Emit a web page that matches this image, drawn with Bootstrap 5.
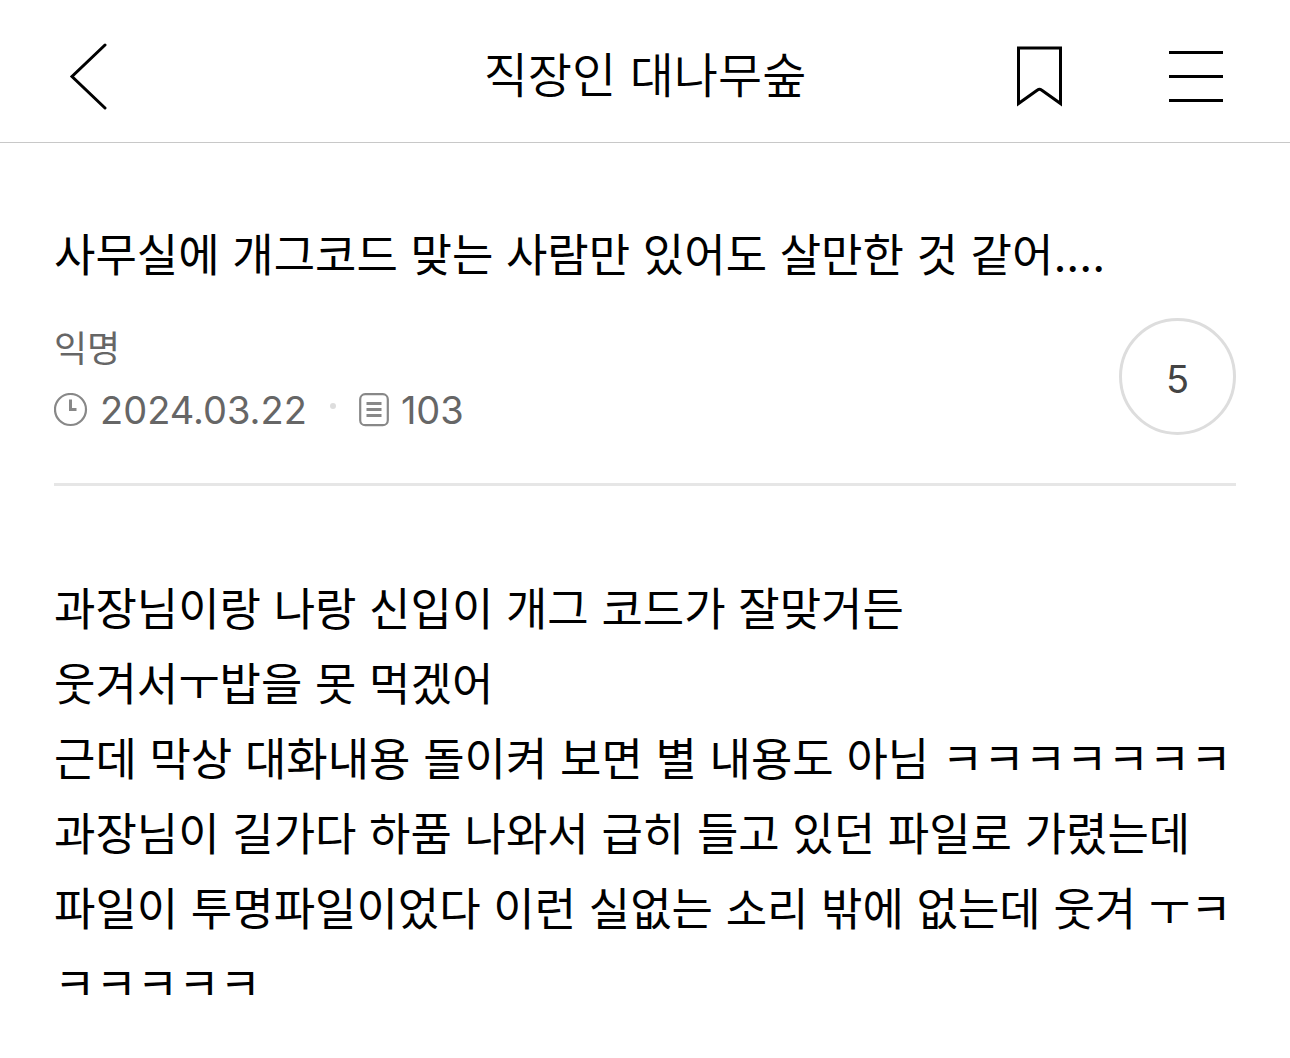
<!DOCTYPE html>
<html lang="ko">
<head>
<meta charset="utf-8">
<meta name="viewport" content="width=device-width, initial-scale=1">
<title>직장인 대나무숲</title>
<link href="https://cdn.jsdelivr.net/npm/bootstrap@5.3.0/dist/css/bootstrap.min.css" rel="stylesheet">
<style>
  body { font-family: Inter, "Noto Sans CJK KR", sans-serif; color: #000; background: #fff; }
  .app-bar { height: 143px; padding: 10px 67px 0; border-bottom: 1px solid #c8c8c8; }
  .bar-side { flex: 1 1 0; }
  .bar-title { font-size: 48px; line-height: 72px; font-weight: 350; }
  .icon-btn { color: #000; line-height: 0; }
  .bar-actions { gap: 106px; }
  .post { padding: 75px 54px 40px; }
  .post-title { font-size: 45px; line-height: 75px; font-weight: 400; margin-bottom: 25px; }
  .post-info { padding-bottom: 43px; border-bottom: 3px solid #e6e6e6; }
  .post-author { font-size: 36px; line-height: 62px; color: #666; }
  .post-meta { font-size: 38px; line-height: 60px; color: #666; }
  .meta-icon { color: #888; margin-right: 12px; }
  .meta-dot { width: 6px; height: 6px; margin: 0 23px 8px; background: #ddd; }
  .count-btn { width: 117px; height: 117px; border: 3px solid #ddd; font-size: 38px; color: #444; padding: 6px 0 0; }
  .post-body { padding-top: 86px; font-size: 45px; line-height: 75px; }
</style>
<script src="https://cdn.jsdelivr.net/npm/bootstrap@5.3.0/dist/js/bootstrap.bundle.min.js"></script>
</head>
<body>
<header class="app-bar d-flex align-items-center">
  <div class="bar-side d-flex">
    <button type="button" class="icon-btn btn p-0 border-0" aria-label="뒤로">
      <svg width="41" height="68" viewBox="-3 0 41 68" fill="none" stroke="currentColor" stroke-width="3" stroke-linecap="round"><path d="M35 3L2 34.500L35 66"/></svg>
    </button>
  </div>
  <h1 class="bar-title mb-0">직장인 대나무숲</h1>
  <div class="bar-side bar-actions d-flex justify-content-end align-items-center">
    <button type="button" class="icon-btn btn p-0 border-0" aria-label="북마크">
      <svg width="46" height="62" viewBox="0 0 46 62" fill="none" stroke="currentColor" stroke-width="3"><path d="M1.500 3H43.500V58.500L24.500 45Q22.500 43.500 20.500 45L1.500 58.500Z"/></svg>
    </button>
    <button type="button" class="icon-btn btn p-0 border-0" aria-label="메뉴">
      <svg width="54" height="54" viewBox="0 0 54 54" fill="none" stroke="currentColor" stroke-width="3"><path d="M0 3.500H54M0 27.500H54M0 51.500H54"/></svg>
    </button>
  </div>
</header>
<main class="post">
  <h2 class="post-title">사무실에 개그코드 맞는 사람만 있어도 살만한 것 같어....</h2>
  <div class="post-info d-flex justify-content-between align-items-start">
    <div>
      <div class="post-author">익명</div>
      <div class="post-meta d-flex align-items-center">
        <svg class="meta-icon" width="34" height="34" viewBox="0 0 34 34" fill="none" stroke="currentColor"><circle cx="16.500" cy="16.500" r="15.500" stroke-width="2.200"/><path d="M16.500 6.500V16.500H22.500" stroke-width="3"/></svg>
        <time datetime="2024-03-22">2024.03.22</time>
        <span class="meta-dot rounded-circle"></span>
        <svg class="meta-icon" width="30" height="34" viewBox="0 0 30 34" fill="none" stroke="currentColor"><rect x="1.200" y="1.200" width="27.600" height="31" rx="5" stroke-width="2.200"/><path d="M7.500 10.500H22.500M7.500 16.500H22.500M7.500 22.500H22.500" stroke-width="3"/></svg>
        <span>103</span>
      </div>
    </div>
    <button type="button" class="count-btn btn rounded-circle" aria-label="댓글 5개">5</button>
  </div>
  <p class="post-body mb-0">과장님이랑 나랑 신입이 개그 코드가 잘맞거든<br>웃겨서ㅜ밥을 못 먹겠어<br>근데 막상 대화내용 돌이켜 보면 별 내용도 아님 ㅋㅋㅋㅋㅋㅋㅋ<br>과장님이 길가다 하품 나와서 급히 들고 있던 파일로 가렸는데<br>파일이 투명파일이었다 이런 실없는 소리 밖에 없는데 웃겨 ㅜㅋㅋㅋㅋㅋㅋ</p>
</main>
</body>
</html>
